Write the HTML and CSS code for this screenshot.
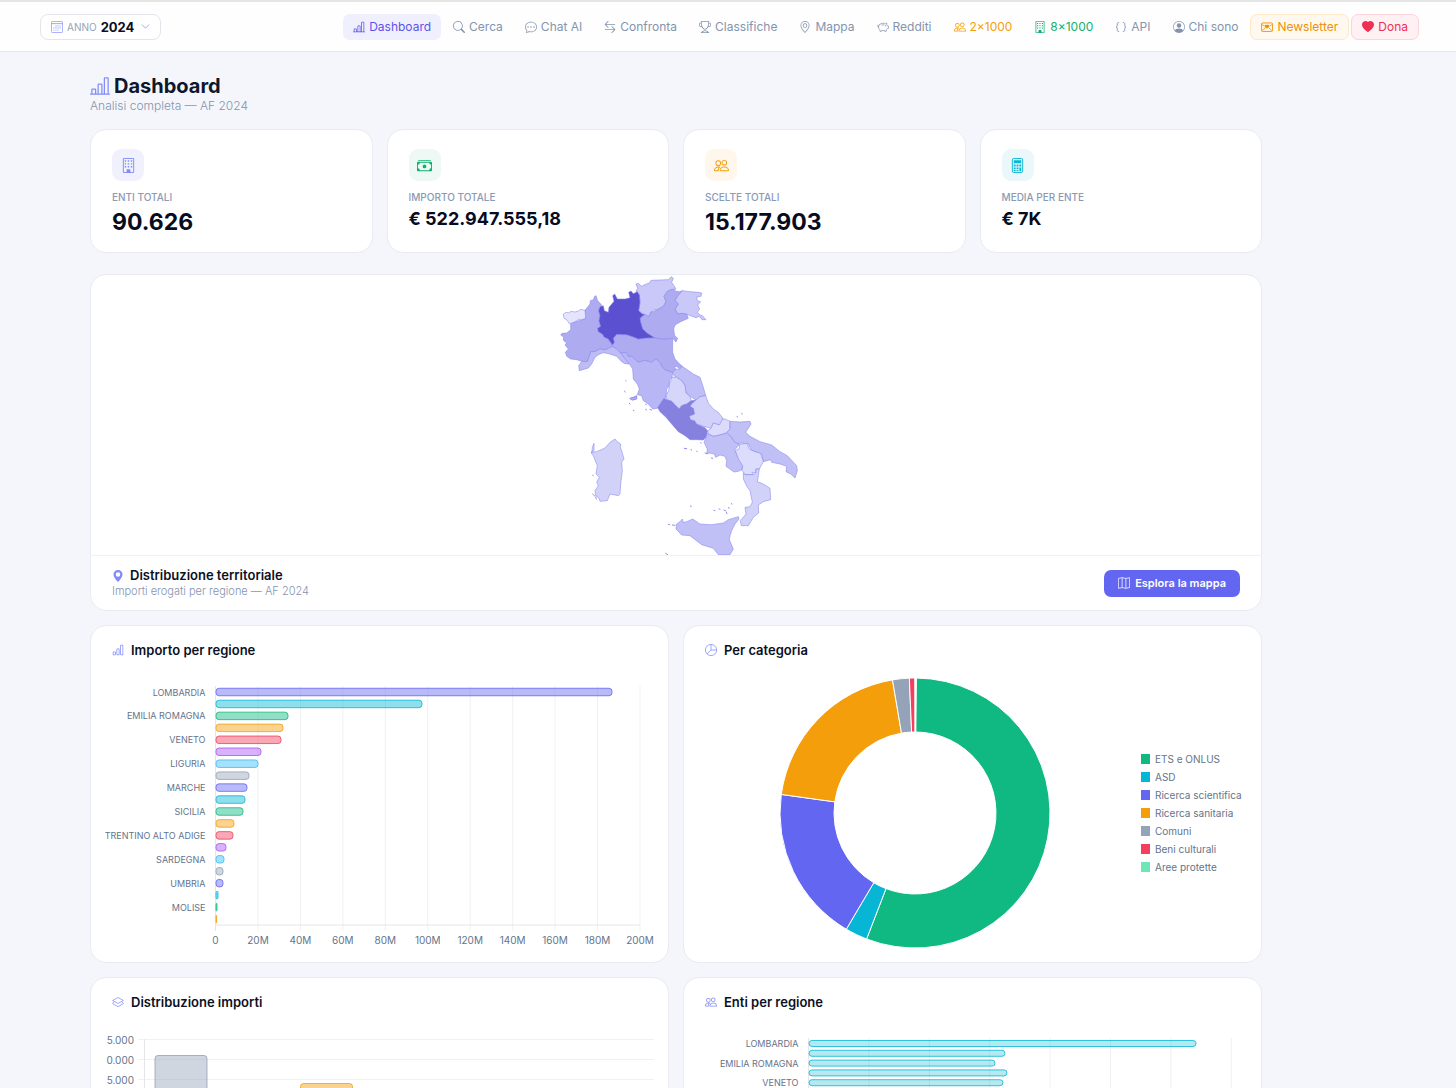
FILE: index.html
```
<!DOCTYPE html>
<html lang="it">
<head>
<meta charset="utf-8">
<meta name="viewport" content="width=device-width, initial-scale=1">
<title>Dashboard</title>
<link rel="stylesheet" href="styles.css">
</head>
<body>
<svg class="sprite" aria-hidden="true">
  <symbol id="i-bars" viewBox="0 0 16 16"><path d="M11 2a1 1 0 0 1 1-1h2a1 1 0 0 1 1 1v12h.5a.5.5 0 0 1 0 1H.5a.5.5 0 0 1 0-1H1v-3a1 1 0 0 1 1-1h2a1 1 0 0 1 1 1v3h1V7a1 1 0 0 1 1-1h2a1 1 0 0 1 1 1v7h1V2zm1 12h2V2h-2v12zm-3 0V7H7v7h2zm-5 0v-3H2v3h2z"/></symbol>
  <symbol id="i-chart" viewBox="0 0 16 16"><path d="M4 11H2v3h2v-3zm5-4H7v7h2V7zm5-5v12h-2V2h2zm-2-1a1 1 0 0 0-1 1v12a1 1 0 0 0 1 1h2a1 1 0 0 0 1-1V2a1 1 0 0 0-1-1h-2zM6 7a1 1 0 0 1 1-1h2a1 1 0 0 1 1 1v7a1 1 0 0 1-1 1H7a1 1 0 0 1-1-1V7zm-5 4a1 1 0 0 1 1-1h2a1 1 0 0 1 1 1v3a1 1 0 0 1-1 1H2a1 1 0 0 1-1-1v-3z"/></symbol>
  <symbol id="i-search" viewBox="0 0 16 16"><path d="M11.742 10.344a6.5 6.5 0 1 0-1.397 1.398h-.001c.03.04.062.078.098.115l3.85 3.85a1 1 0 0 0 1.415-1.414l-3.85-3.85a1.007 1.007 0 0 0-.115-.1zM12 6.5a5.5 5.5 0 1 1-11 0 5.5 5.5 0 0 1 11 0z"/></symbol>
  <symbol id="i-chat" viewBox="0 0 16 16"><path d="M5 8a1 1 0 1 1-2 0 1 1 0 0 1 2 0zm4 0a1 1 0 1 1-2 0 1 1 0 0 1 2 0zm3 1a1 1 0 1 0 0-2 1 1 0 0 0 0 2z"/><path d="m2.165 15.803.02-.004c1.83-.363 2.948-.842 3.468-1.105A9.06 9.06 0 0 0 8 15c4.418 0 8-3.134 8-7s-3.582-7-8-7-8 3.134-8 7c0 1.76.743 3.37 1.97 4.6a10.437 10.437 0 0 1-.524 2.318l-.003.011a10.722 10.722 0 0 1-.244.637c-.079.186.074.394.273.362a21.673 21.673 0 0 0 .693-.125zm.8-3.108a1 1 0 0 0-.287-.801C1.618 10.83 1 9.468 1 8c0-3.192 3.004-6 7-6s7 2.808 7 6c0 3.193-3.004 6-7 6a8.06 8.06 0 0 1-2.088-.272 1 1 0 0 0-.711.074c-.387.196-1.24.57-2.634.893a10.97 10.97 0 0 0 .398-2z"/></symbol>
  <symbol id="i-compare" viewBox="0 0 16 16"><path d="M1 11.5a.5.5 0 0 0 .5.5h11.793l-3.147 3.146a.5.5 0 0 0 .708.708l4-4a.5.5 0 0 0 0-.708l-4-4a.5.5 0 0 0-.708.708L13.293 11H1.5a.5.5 0 0 0-.5.5zm14-7a.5.5 0 0 1-.5.5H2.707l3.147 3.146a.5.5 0 1 1-.708.708l-4-4a.5.5 0 0 1 0-.708l4-4a.5.5 0 1 1 .708.708L2.707 4H14.5a.5.5 0 0 1 .5.5z"/></symbol>
  <symbol id="i-trophy" viewBox="0 0 16 16"><path d="M2.5.5A.5.5 0 0 1 3 0h10a.5.5 0 0 1 .5.5c0 .538-.012 1.05-.034 1.536a3 3 0 1 1-1.133 5.89c-.79 1.865-1.878 2.777-2.833 3.011v2.173l1.425.356c.194.048.377.135.537.255L13.3 15.1a.5.5 0 0 1-.3.9H3a.5.5 0 0 1-.3-.9l1.838-1.379c.16-.12.343-.207.537-.255L6.5 13.11v-2.173c-.955-.234-2.043-1.146-2.833-3.012a3 3 0 1 1-1.132-5.89A33.076 33.076 0 0 1 2.5.5zm.099 2.54a2 2 0 0 0 .72 3.935c-.333-1.05-.588-2.346-.72-3.935zm10.083 3.935a2 2 0 0 0 .72-3.935c-.133 1.59-.388 2.885-.72 3.935zM3.504 1c.007.517.026 1.006.056 1.469.13 2.028.457 3.546.87 4.667C5.294 9.48 6.484 10 7 10a.5.5 0 0 1 .5.5v2.61a1 1 0 0 1-.757.97l-1.426.356a.5.5 0 0 0-.179.085L4.5 15h7l-.638-.479a.501.501 0 0 0-.18-.085l-1.425-.356a1 1 0 0 1-.757-.97V10.5A.5.5 0 0 1 9 10c.516 0 1.706-.52 2.57-2.864.413-1.12.74-2.64.87-4.667.03-.463.049-.952.056-1.469H3.504z"/></symbol>
  <symbol id="i-geo" viewBox="0 0 16 16"><path d="M12.166 8.94c-.524 1.062-1.234 2.12-1.96 3.07A31.493 31.493 0 0 1 8 14.58a31.481 31.481 0 0 1-2.206-2.57c-.726-.95-1.436-2.008-1.96-3.07C3.304 7.867 3 6.862 3 6a5 5 0 0 1 10 0c0 .862-.305 1.867-.834 2.94zM8 16s6-5.686 6-10A6 6 0 0 0 2 6c0 4.314 6 10 6 10z"/><path d="M8 8a2 2 0 1 1 0-4 2 2 0 0 1 0 4zm0 1a3 3 0 1 0 0-6 3 3 0 0 0 0 6z"/></symbol>
  <symbol id="i-geo-fill" viewBox="0 0 16 16"><path d="M8 16s6-5.686 6-10A6 6 0 0 0 2 6c0 4.314 6 10 6 10zm0-7a3 3 0 1 1 0-6 3 3 0 0 1 0 6z"/></symbol>
  <symbol id="i-piggy" viewBox="0 0 16 16"><g fill="none" stroke="currentColor" stroke-linejoin="round" stroke-linecap="round"><path d="M3 5.2C4.2 3.700 6 3 8 3c1.200 0 2.200.2 3.200.7l1.800-1v2.200c.6.600 1 1.200 1.300 1.900h1.200v3h-1.400c-.4.900-1 1.500-1.800 2v2h-2.100l-.4-1.200c-1.200.2-2.300.2-3.400 0L6 13.800H4l-.2-2.200C2.600 10.600 2 9.400 2 8c0-1 .3-2 1-2.800z"/><path d="M2 8C.8 7.800.3 6.500 1.200 5.500M6.500 5.200c1-.3 2-.3 3 0"/></g><circle cx="11.500" cy="6.500" r=".7"/></symbol>
  <symbol id="i-people" viewBox="0 0 16 16"><path d="M15 14s1 0 1-1-1-4-5-4-5 3-5 4 1 1 1 1h8zm-7.978-1A.261.261 0 0 1 7 12.996c.001-.264.167-1.03.76-1.72C8.312 10.629 9.282 10 11 10c1.717 0 2.687.63 3.24 1.276.593.69.758 1.457.76 1.72l-.008.002a.274.274 0 0 1-.014.002H7.022zM11 7a2 2 0 1 0 0-4 2 2 0 0 0 0 4zm3-2a3 3 0 1 1-6 0 3 3 0 0 1 6 0zM6.936 9.28a5.88 5.88 0 0 0-1.23-.247A7.35 7.35 0 0 0 5 9c-4 0-5 3-5 4 0 .667.333 1 1 1h4.216A2.238 2.238 0 0 1 5 13c0-1.01.377-2.042 1.09-2.904.243-.294.526-.569.846-.816zM4.92 10A5.493 5.493 0 0 0 4 13H1c0-.26.164-1.03.76-1.724.545-.636 1.492-1.256 3.16-1.275zM1.5 5.5a3 3 0 1 1 6 0 3 3 0 0 1-6 0zm3-2a2 2 0 1 0 0 4 2 2 0 0 0 0-4z"/></symbol>
  <symbol id="i-building" viewBox="0 0 16 16"><path fill="none" stroke="currentColor" stroke-linejoin="round" d="M2.500.5h11v15h-11z"/><path d="M4 2.500h1.500V4H4zM7.200 2.500h1.500V4H7.200zM10.500 2.500H12V4h-1.500zM4 5.500h1.500V7H4zM7.200 5.500h1.500V7H7.200zM10.500 5.500H12V7h-1.500zM4 8.500h1.500V10H4zM7.200 8.500h1.500V10H7.200zM10.500 8.500H12V10h-1.500zM6 12.500a.5.500 0 0 1 .5-.5h3a.5.500 0 0 1 .5.500V16H6z"/></symbol>
  <symbol id="i-braces" viewBox="0 0 16 16"><path fill="none" stroke="currentColor" stroke-width="1.200" stroke-linecap="round" d="M5 2C3.300 2 3 2.800 3 4v1.800C3 7.200 2.500 8 1.300 8 2.500 8 3 8.800 3 10.200V12c0 1.200.3 2 2 2M11 2c1.700 0 2 .8 2 2v1.800c0 1.400.5 2.200 1.700 2.200-1.200 0-1.700.8-1.700 2.200V12c0 1.200-.3 2-2 2"/></symbol>
  <symbol id="i-person" viewBox="0 0 16 16"><path d="M11 6a3 3 0 1 1-6 0 3 3 0 0 1 6 0z"/><path d="M0 8a8 8 0 1 1 16 0A8 8 0 0 1 0 8zm8-7a7 7 0 0 0-5.468 11.370C3.242 11.226 4.805 10 8 10s4.757 1.225 5.468 2.370A7 7 0 0 0 8 1z"/></symbol>
  <symbol id="i-mail" viewBox="0 0 16 16"><rect x=".6" y="2.600" width="14.800" height="11.300" rx="1.500" fill="none" stroke="currentColor" stroke-width="1.200"/><path fill="none" stroke="currentColor" d="M1 4.500 5 7M15 4.500 11 7M1 13l5-4M15 13l-5-4"/><path d="M8 5.600c1.700-1.700 5.500 1 0 4.700-5.500-3.700-1.700-6.400 0-4.700z"/></symbol>
  <symbol id="i-heart" viewBox="0 0 16 16"><path d="M8 1.314C12.438-3.248 23.534 4.735 8 15-7.534 4.736 3.562-3.248 8 1.314z"/></symbol>
  <symbol id="i-calendar" viewBox="0 0 16 16"><path fill="none" stroke="currentColor" d="M2 .5h12A1.500 1.500 0 0 1 15.500 2v12a1.500 1.500 0 0 1-1.500 1.500H2A1.500 1.500 0 0 1 .5 14V2A1.500 1.500 0 0 1 2 .5zM.5 3.500h15"/><path d="M6 6h1.300v1.300H6zM8.700 6H10v1.300H8.700zM11.500 6h1.300v1.300h-1.300zM3.200 8.800h1.300v1.300H3.200zM6 8.800h1.300v1.300H6zM8.700 8.800H10v1.300H8.700zM11.500 8.800h1.300v1.300h-1.300zM3.200 11.500h1.300v1.300H3.200zM6 11.500h1.300v1.300H6zM8.700 11.500H10v1.300H8.700z"/></symbol>
  <symbol id="i-chevron" viewBox="0 0 16 16"><path fill="none" stroke="currentColor" stroke-width="1.300" stroke-linecap="round" stroke-linejoin="round" d="m2 5 6 6 6-6"/></symbol>
  <symbol id="i-cash" viewBox="0 0 16 16"><path d="M1 3a1 1 0 0 1 1-1h12a1 1 0 0 1 1 1H1zm7 8a2 2 0 1 0 0-4 2 2 0 0 0 0 4z"/><path d="M0 5a1 1 0 0 1 1-1h14a1 1 0 0 1 1 1v8a1 1 0 0 1-1 1H1a1 1 0 0 1-1-1V5zm3 0a2 2 0 0 1-2 2v4a2 2 0 0 1 2 2h10a2 2 0 0 1 2-2V7a2 2 0 0 1-2-2H3z"/></symbol>
  <symbol id="i-calc" viewBox="0 0 16 16"><rect x="2.500" y=".5" width="11" height="15" rx="1.500" fill="none" stroke="currentColor"/><path d="M4 2.500h8v3H4zM4 7h2v2H4zM7 7h2v2H7zM10 7h2v2h-2zM4 10h2v1.600H4zM7 10h2v1.600H7zM10 10h2v4.200h-2zM4 12.600h2v1.600H4zM7 12.600h2v1.600H7z"/></symbol>
  <symbol id="i-map" viewBox="0 0 16 16"><path fill="none" stroke="currentColor" stroke-linejoin="round" d="m.5 1.900 5-1 5 1 5-1v13.200l-5 1-5-1-5 1zM5.500.9v13.200M10.500 1.900v13.200"/></symbol>
  <symbol id="i-pie" viewBox="0 0 16 16"><path fill="none" stroke="currentColor" stroke-linejoin="round" d="M15.500 8a7.500 7.500 0 1 1-15 0 7.500 7.500 0 0 1 15 0zM8 .5V8h7.500M8 8l-5.300 5.300"/></symbol>
  <symbol id="i-layers" viewBox="0 0 16 16"><path fill="none" stroke="currentColor" stroke-linejoin="round" d="m8 2 7.200 4L8 10 .8 6zM3 7.300.8 10.200 8 14.200l7.200-4L13 7.300"/></symbol>
</svg>

<header class="topbar">
  <label class="year">
    <svg class="icon"><use href="#i-calendar"/></svg>
    <span class="year-label">ANNO</span>
    <select class="year-select"><option>2024</option></select>
    <svg class="icon icon-chevron"><use href="#i-chevron"/></svg>
  </label>
  <nav class="nav">
    <a class="nav-link active" href="#"><svg class="icon"><use href="#i-bars"/></svg>Dashboard</a>
    <a class="nav-link" href="#"><svg class="icon"><use href="#i-search"/></svg>Cerca</a>
    <a class="nav-link" href="#"><svg class="icon"><use href="#i-chat"/></svg>Chat AI</a>
    <a class="nav-link" href="#"><svg class="icon"><use href="#i-compare"/></svg>Confronta</a>
    <a class="nav-link" href="#"><svg class="icon"><use href="#i-trophy"/></svg>Classifiche</a>
    <a class="nav-link" href="#"><svg class="icon"><use href="#i-geo"/></svg>Mappa</a>
    <a class="nav-link" href="#"><svg class="icon"><use href="#i-piggy"/></svg>Redditi</a>
    <a class="nav-link amber" href="#"><svg class="icon"><use href="#i-people"/></svg>2×1000</a>
    <a class="nav-link green" href="#"><svg class="icon"><use href="#i-building"/></svg>8×1000</a>
    <a class="nav-link" href="#"><svg class="icon"><use href="#i-braces"/></svg>API</a>
    <a class="nav-link" href="#"><svg class="icon"><use href="#i-person"/></svg>Chi sono</a>
    <a class="nav-link newsletter" href="#"><svg class="icon"><use href="#i-mail"/></svg>Newsletter</a>
    <a class="nav-link donate" href="#"><svg class="icon"><use href="#i-heart"/></svg>Dona</a>
  </nav>
</header>

<main class="page">
  <div class="page-head">
    <h1 class="page-title"><svg class="icon"><use href="#i-bars"/></svg>Dashboard</h1>
    <p class="page-sub">Analisi completa — AF 2024</p>
  </div>

  <section class="stats">
    <article class="card stat"><span class="badge indigo"><svg class="icon"><use href="#i-building"/></svg></span><h2 class="stat-label">ENTI TOTALI</h2><p class="stat-value">90.626</p></article>
    <article class="card stat"><span class="badge emerald"><svg class="icon"><use href="#i-cash"/></svg></span><h2 class="stat-label">IMPORTO TOTALE</h2><p class="stat-value small">€ 522.947.555,18</p></article>
    <article class="card stat"><span class="badge orange"><svg class="icon"><use href="#i-people"/></svg></span><h2 class="stat-label">SCELTE TOTALI</h2><p class="stat-value">15.177.903</p></article>
    <article class="card stat"><span class="badge cyan"><svg class="icon"><use href="#i-calc"/></svg></span><h2 class="stat-label">MEDIA PER ENTE</h2><p class="stat-value small">€ 7K</p></article>
  </section>

  <section class="card territory">
    <div class="map-area">
      <svg class="map" viewBox="0 18 756 840" role="img" aria-label="Importi per regione">
        <polygon fill="#c9c8f8" points="258,45 265,43 275,52 286,46 297,43 303,34 330,33 355,32 364,23 370,28 365,40 372,50 378,60 362,64 352,66 342,82 348,98 340,112 330,118 322,122 312,121 302,130 297,143 286,142 277,133 266,125 270,100 268,78 258,66 263,58"/>
        <polygon fill="#c9c8f8" points="397,65 420,68 445,70 455,72 453,82 440,84 442,95 452,98 443,108 449,120 442,130 449,137 457,140 468,152 456,152 447,142 438,146 415,138 395,133 383,135 375,120 385,105 375,95 382,82"/>
        <polygon fill="#aeabf1" points="352,68 362,62 370,60 378,67 388,68 397,65 382,82 375,95 385,105 375,120 383,135 395,133 410,135 415,148 392,158 375,168 371,180 374,200 383,208 378,219 368,208 340,211 310,206 292,193 278,180 272,160 270,148 284,136 297,143 302,130 322,122 340,112 348,98 342,82"/>
        <polygon fill="#aeabf1" points="107,148 105,124 120,105 121,95 130,92 134,82 138,80 143,95 155,108 146,125 150,140 147,155 152,172 143,178 145,188 158,196 162,204 175,210 185,228 187,235 165,243 150,240 135,248 122,248 118,262 112,278 95,277 80,272 62,270 50,262 46,250 55,240 45,228 50,222 40,214 41,204 32,198 36,193 50,192 62,182 62,165 72,160 95,152"/>
        <polygon fill="#e5e4fc" points="40,135 48,130 58,132 62,127 75,129 85,126 92,121 105,124 107,148 95,152 86,151 72,160 58,164 50,152 42,148"/>
        <polygon fill="#bdbcf5" points="187,232 205,240 215,252 222,266 238,285 225,284 215,278 200,262 175,254 160,251 145,257 135,265 125,285 115,297 88,305 86,290 95,277 112,278 118,262 122,248 135,248 150,240 165,243"/>
        <polygon fill="#aeabf1" points="193,200 200,196 230,197 248,203 265,210 310,206 340,211 368,208 368,250 375,270 386,282 397,292 388,300 380,292 372,296 378,300 368,310 345,303 333,290 332,282 318,270 305,280 285,274 265,280 245,262 236,263 228,250 212,252 200,240 187,232 187,222"/>
        <polygon fill="#b9b6f5" points="212,252 228,250 236,263 245,262 265,280 285,274 305,280 318,270 332,282 333,290 345,303 368,310 366,325 358,332 358,350 350,360 348,385 335,400 322,418 308,420 295,405 280,395 275,380 262,377 268,360 262,345 250,330 248,300 235,280"/>
        <polygon fill="#c0bef6" points="368,310 378,300 388,302 397,292 430,315 450,325 460,355 467,380 450,383 438,393 420,382 408,372 405,350 395,335 380,325 372,320"/>
        <polygon fill="#d6d5fa" points="366,325 380,325 395,335 405,350 408,372 420,382 424,395 410,405 395,410 388,420 375,408 365,397 350,392 348,378 356,365 358,345"/>
        <polygon fill="#8680df" points="342,388 350,392 365,397 375,408 388,420 395,410 410,405 424,395 438,393 425,405 424,414 434,418 434,435 418,442 422,452 434,455 440,465 465,476 473,485 468,505 460,513 440,512 420,512 405,500 385,488 365,465 348,445 330,428 323,416"/>
        <polygon fill="#d2d1fa" points="438,393 450,383 467,380 475,402 490,420 505,430 519,448 518,458 508,468 490,462 483,478 465,473 440,465 434,455 422,452 418,442 434,435 430,418 420,412 425,405"/>
        <polygon fill="#dcdbfb" points="483,478 490,462 508,468 518,450 525,450 540,457 540,480 530,492 510,498 490,502 475,495 473,485"/>
        <polygon fill="#c0bff6" points="540,457 570,459 600,457 603,465 587,490 600,502 630,518 665,528 690,548 712,560 740,590 742,605 735,627 722,615 708,608 710,592 690,585 665,580 662,572 652,575 640,578 635,555 615,548 605,545 595,525 575,522 555,525 545,505 530,490 540,480"/>
        <polygon fill="#c0bff6" points="473,494 490,502 510,498 530,492 540,500 555,520 568,526 554,543 565,565 578,590 575,603 565,607 552,609 528,592 530,575 525,562 510,558 497,565 493,555 480,552 470,555 472,540 462,520"/>
        <polygon fill="#dcdcfc" points="568,526 592,523 597,540 615,548 632,553 640,578 628,600 618,600 617,612 606,610 610,617 585,617 577,605 578,590 565,570 556,545 568,538"/>
        <polygon fill="#d1d1fa" points="580,612 585,617 610,617 617,612 618,600 628,600 625,620 622,638 640,645 660,658 662,692 640,698 625,708 626,732 610,745 595,770 574,770 571,755 588,735 585,715 600,713 607,700 600,665 592,655 580,630"/>
        <polygon fill="#c0bff6" points="380,765 390,758 397,750 399,760 410,758 428,750 450,765 485,767 520,762 535,752 565,743 567,750 555,765 545,785 540,800 538,812 550,840 540,857 505,857 490,838 455,827 420,800 395,798 378,780"/>
        <polygon fill="#d2d2f9" points="123,550 140,548 165,537 180,520 195,510 202,518 212,525 211,535 215,545 222,570 215,580 217,605 212,645 210,675 205,680 180,675 172,695 150,697 147,687 137,680 135,665 145,650 140,640 148,625 138,615 142,590 130,560 125,555 127,535 132,523 132,545"/>
        <polygon fill="#5b50cf" points="150,113 160,110 163,125 175,130 177,115 192,97 188,80 194,75 202,90 225,90 240,86 236,70 243,66 250,74 262,68 268,78 270,100 266,125 277,135 284,136 270,148 272,160 278,180 292,193 313,206 290,207 265,210 248,203 230,197 200,196 190,208 193,220 187,228 175,210 162,204 158,196 145,188 143,178 152,172 147,155 150,140 146,125"/>
        <g class="islands">
          <path d="m240,388 12-4 8-4v10l-12 3zM223,366l3,3M227,334l2,2M238,403l2,2M250,424l2,1M287,406l2,1M287,421l3,2M300,421l5,2M561,443l2,1M575,434l2,1M403,538l7,1M423,542l2,1M440,547l2,1M421,711l3,1M492,724l3,1M507,720l3,1M522,723l6,3M529,730l2,4M535,716l3,1M544,704l2,1M355,766l4,1M367,768l8,1M347,853l6,4M128,675l6,6M137,684l2,6M128,619l2,1M465,552l6,2M484,567l4,1M452,521l2,1"/>
        </g>
      </svg>
    </div>
    <div class="territory-foot">
      <div>
        <h2 class="territory-title"><svg class="icon"><use href="#i-geo-fill"/></svg>Distribuzione territoriale</h2>
        <p class="territory-sub">Importi erogati per regione — AF 2024</p>
      </div>
      <button class="explore" type="button"><svg class="icon"><use href="#i-map"/></svg>Esplora la mappa</button>
    </div>
  </section>

  <section class="charts">
    <article class="card chart">
      <h2 class="chart-title"><svg class="icon"><use href="#i-chart"/></svg>Importo per regione</h2>
      <svg class="plot" id="amounts" viewBox="0 0 549 282"></svg>
    </article>
    <article class="card chart">
      <h2 class="chart-title"><svg class="icon"><use href="#i-pie"/></svg>Per categoria</h2>
      <div class="donut-row">
        <div class="donut-box"><svg class="donut" id="categories" viewBox="0 0 272 272"></svg></div>
        <ul class="legend">
          <li class="legend-item c-emerald">ETS e ONLUS</li>
          <li class="legend-item c-cyan">ASD</li>
          <li class="legend-item c-indigo">Ricerca scientifica</li>
          <li class="legend-item c-amber">Ricerca sanitaria</li>
          <li class="legend-item c-slate">Comuni</li>
          <li class="legend-item c-rose">Beni culturali</li>
          <li class="legend-item c-mint">Aree protette</li>
        </ul>
      </div>
    </article>
    <article class="card chart">
      <h2 class="chart-title"><svg class="icon"><use href="#i-layers"/></svg>Distribuzione importi</h2>
      <svg class="plot" id="ranges" viewBox="0 0 549 282"></svg>
    </article>
    <article class="card chart">
      <h2 class="chart-title"><svg class="icon"><use href="#i-people"/></svg>Enti per regione</h2>
      <svg class="plot" id="entities" viewBox="0 0 549 282"></svg>
    </article>
  </section>
</main>
<script src="charts.js"></script>
</body>
</html>
```
FILE: styles.css
```
* { box-sizing: border-box; }
body {
  margin: 0;
  background: #f5f6fb;
  color: #0b1023;
  font-family: Inter, "Open Sans", sans-serif;
  font-size: 12px;
}
h1, h2, p, ul { margin: 0; padding: 0; }
.sprite { position: absolute; width: 0; height: 0; }
.icon { width: 12px; height: 12px; fill: currentColor; flex: none; }

.topbar {
  display: flex;
  align-items: center;
  justify-content: space-between;
  height: 52px;
  padding: 2px 37px 0 40px;
  background: #fefefe;
  border-bottom: 1px solid #e6e8f0;
  box-shadow: inset 0 2px #e4e6e5;
}
.year {
  display: flex;
  align-items: center;
  gap: 4px;
  height: 26px;
  padding: 0 10px;
  border: 1px solid #e4e5ea;
  border-radius: 8px;
  background: #fff;
  color: #818cf8;
}
.year-label { color: #94a3b8; font-size: 10px; }
.year-select {
  appearance: none;
  width: 36px;
  padding: 0;
  border: 0;
  background: none;
  color: #0b1023;
  font: 700 13px Inter, sans-serif;
}
.icon-chevron { width: 9px; height: 9px; }
.nav { display: flex; gap: 2px; }
.nav-link {
  display: flex;
  align-items: center;
  gap: 4px;
  height: 26px;
  padding: 0 10px;
  border-radius: 7px;
  color: #8494af;
  font-weight: 400;
  text-decoration: none;
  white-space: nowrap;
}
.nav-link.active { background: #f0effe; color: #5b54ea; }
.nav-link.amber { color: #f59e0b; }
.nav-link.green { color: #10b070; }
.nav-link.newsletter { background: #fff8ef; border: 1px solid #fde8c8; color: #ee9108; }
.nav-link.donate { background: #fff0f3; border: 1px solid #fdd3dc; color: #f02f55; }

.page { padding: 22px 194px 24px 90px; }
.page-title {
  display: flex;
  align-items: center;
  gap: 4px;
  color: #0f172a;
  font-size: 20px;
  line-height: 24px;
}
.page-title .icon { width: 20px; height: 20px; color: #818cf8; }
.page-sub { color: #8494af; font-weight: 300; line-height: 15px; }
.card { background: #fff; border: 1px solid #e9ebf1; border-radius: 16px; }

.stats { display: grid; grid-template-columns: repeat(4, 1fr); gap: 14px; margin-top: 16px; }
.stat { height: 124px; padding: 19px 21px; }
.badge { display: flex; align-items: center; justify-content: center; width: 32px; height: 32px; border-radius: 9px; }
.badge .icon { width: 15px; height: 15px; }
.indigo { background: #f1f1fe; color: #818cf8; }
.emerald { background: #eef8f4; color: #10b070; }
.orange { background: #fff7eb; color: #f59e0b; }
.cyan { background: #ebf8fb; color: #06b6d4; }
.stat-label { margin-top: 9px; color: #8a9ab5; font-size: 10px; font-weight: 500; line-height: 14px; letter-spacing: 0; }
.stat-value { margin-top: 3px; color: #070c1e; font-size: 23px; font-weight: 700; line-height: 30px; }
.stat-value.small { margin-top: 2px; font-size: 18px; line-height: 26px; }

.territory { margin-top: 21px; overflow: hidden; }
.map-area { display: flex; justify-content: center; height: 281px; border-bottom: 1px solid #f0f1f5; }
.map { width: 252px; height: 280px; }
.map polygon { stroke: #8583ec; stroke-opacity: 0.8; stroke-width: 2; stroke-linejoin: round; }
.islands { fill: #aeabf1; stroke: #8f8df0; stroke-width: 3; stroke-linecap: round; }
.territory-foot { display: flex; align-items: center; justify-content: space-between; padding: 11px 21px; }
.territory-title { display: flex; align-items: center; gap: 6px; font-size: 13px; font-weight: 600; line-height: 17px; }
.territory-title .icon, .chart-title .icon { color: #818cf8; }
.territory-sub { color: #8494af; font-size: 11px; font-weight: 300; line-height: 15px; }
.explore {
  display: flex;
  align-items: center;
  gap: 5px;
  height: 27px;
  padding: 0 14px;
  border: 0;
  border-radius: 7px;
  background: #6366f1;
  color: #fff;
  font: 600 11px Inter, sans-serif;
}

.charts { display: grid; grid-template-columns: repeat(2, 1fr); gap: 14px; margin-top: 14px; }
.chart { padding: 13px 14px 3px; min-height: 338px; }
.chart-title {
  display: flex;
  align-items: center;
  gap: 7px;
  padding: 0 7px;
  font-size: 13px;
  font-weight: 600;
  line-height: 22px;
}
.plot { display: block; width: 100%; margin-top: 14px; overflow: hidden; }
.plot text { fill: #64748b; font-size: 9px; dominant-baseline: central; }
.plot .tick { font-size: 10px; }
.grid-line { stroke: #f0f1f4; }
.axis-line { stroke: #e4e6ea; }
.donut-row { display: flex; align-items: center; gap: 9px; margin-top: 14px; padding: 2px 0 8px; }
.donut-box { display: flex; flex: 1; justify-content: center; }
.donut { width: 272px; height: 272px; }
.donut path { stroke: #fff; stroke-width: 1; }
.legend { width: 106px; list-style: none; }
.legend-item { display: flex; align-items: center; gap: 5px; height: 18px; color: #64748b; font-size: 10px; white-space: nowrap; }
.legend-item::before { content: ""; width: 9px; height: 10px; background: currentColor; }
.c-emerald::before { background: #10b981; }
.c-cyan::before { background: #06b6d4; }
.c-indigo::before { background: #6366f1; }
.c-amber::before { background: #f59e0b; }
.c-slate::before { background: #94a3b8; }
.c-rose::before { background: #f43f5e; }
.c-mint::before { background: #6ee7b7; }
```
FILE: charts.js
```
const NS = 'http://www.w3.org/2000/svg';
const PALETTE = ['#6366f1', '#06b6d4', '#10b981', '#f59e0b', '#f43f5e', '#a855f7', '#38bdf8', '#94a3b8'];

function add(parent, tag, attrs, text) {
  const node = document.createElementNS(NS, tag);
  for (const key in attrs) node.setAttribute(key, attrs[key]);
  if (text) node.textContent = text;
  parent.appendChild(node);
}

function rowChart(id, o) {
  const svg = document.getElementById(id);
  for (let i = 0; i <= o.ticks; i++) {
    const x = o.left + i * o.step;
    add(svg, 'line', { x1: x, x2: x, y1: o.top, y2: o.bottom + 6, class: i ? 'grid-line' : 'axis-line' });
    if (o.tickText) add(svg, 'text', { x: x, y: o.bottom + 15, 'text-anchor': 'middle', class: 'tick' }, o.tickText(i));
  }
  add(svg, 'line', { x1: o.left, x2: o.left + o.ticks * o.step, y1: o.bottom, y2: o.bottom, class: 'axis-line' });
  o.widths.forEach((w, i) => {
    const color = o.color || PALETTE[i % 8];
    const y = o.first + i * o.pitch;
    const width = Math.max(w - 1, 0.6);
    add(svg, 'rect', { x: o.left + 0.5, y: y - o.thick / 2, width: width, height: o.thick, rx: Math.min(3, width / 2), fill: color, 'fill-opacity': o.fill, stroke: color, 'stroke-opacity': 0.8 });
    if (o.labels[i]) add(svg, 'text', { x: o.left - 10, y: y, 'text-anchor': 'end' }, o.labels[i]);
  });
}

rowChart('amounts', {
  left: 110.5, step: 42.45, ticks: 10, top: 11, bottom: 250, first: 17, pitch: 11.95, thick: 7.5, fill: 0.45,
  tickText: i => i ? i * 20 + 'M' : '0',
  widths: [397, 207, 73, 68, 66, 46, 43, 34, 32, 30, 28, 19, 18, 11, 9, 8, 8, 3, 2, 1],
  labels: { 0: 'LOMBARDIA', 2: 'EMILIA ROMAGNA', 4: 'VENETO', 6: 'LIGURIA', 8: 'MARCHE', 10: 'SICILIA', 12: 'TRENTINO ALTO ADIGE', 14: 'SARDEGNA', 16: 'UMBRIA', 18: 'MOLISE' }
});

rowChart('entities', {
  left: 110.5, step: 60.4, ticks: 7, top: 11, bottom: 270, first: 16.5, pitch: 9.8, thick: 6, fill: 0.3, color: '#06b6d4',
  widths: [388, 197, 187, 199, 195],
  labels: { 0: 'LOMBARDIA', 2: 'EMILIA ROMAGNA', 4: 'VENETO' }
});

const ranges = document.getElementById('ranges');
['5.000', '0.000', '5.000'].forEach((label, i) => {
  const y = 12.5 + i * 20;
  add(ranges, 'line', { x1: 33, x2: 549, y1: y, y2: y, class: 'grid-line' });
  add(ranges, 'text', { x: 29, y: y, 'text-anchor': 'end', class: 'tick' }, label);
});
add(ranges, 'line', { x1: 39.5, x2: 39.5, y1: 12, y2: 270, class: 'axis-line' });
[[50, 28.5, '#94a3b8'], [195.5, 56.5, '#f59e0b']].forEach(([x, y, color]) => {
  add(ranges, 'rect', { x: x, y: y, width: 52, height: 270 - y, rx: 3, fill: color, 'fill-opacity': 0.45, stroke: color, 'stroke-opacity': 0.8 });
});

const slices = [[0.6, 201, '#10b981'], [201, 210.6, '#06b6d4'], [210.6, 277.9, '#6366f1'], [277.9, 350.4, '#f59e0b'], [350.4, 357.6, '#94a3b8'], [357.6, 359.9, '#f43f5e']];
const donut = document.getElementById('categories');
const point = (r, deg) => {
  const a = deg * Math.PI / 180;
  return (136 + r * Math.sin(a)).toFixed(2) + ' ' + (136 - r * Math.cos(a)).toFixed(2);
};
slices.forEach(([from, to, color]) => {
  const large = to - from > 180 ? 1 : 0;
  add(donut, 'path', {
    fill: color,
    d: `M${point(135, from)}A135 135 0 ${large} 1 ${point(135, to)}L${point(81, to)}A81 81 0 ${large} 0 ${point(81, from)}Z`
  });
});
```
